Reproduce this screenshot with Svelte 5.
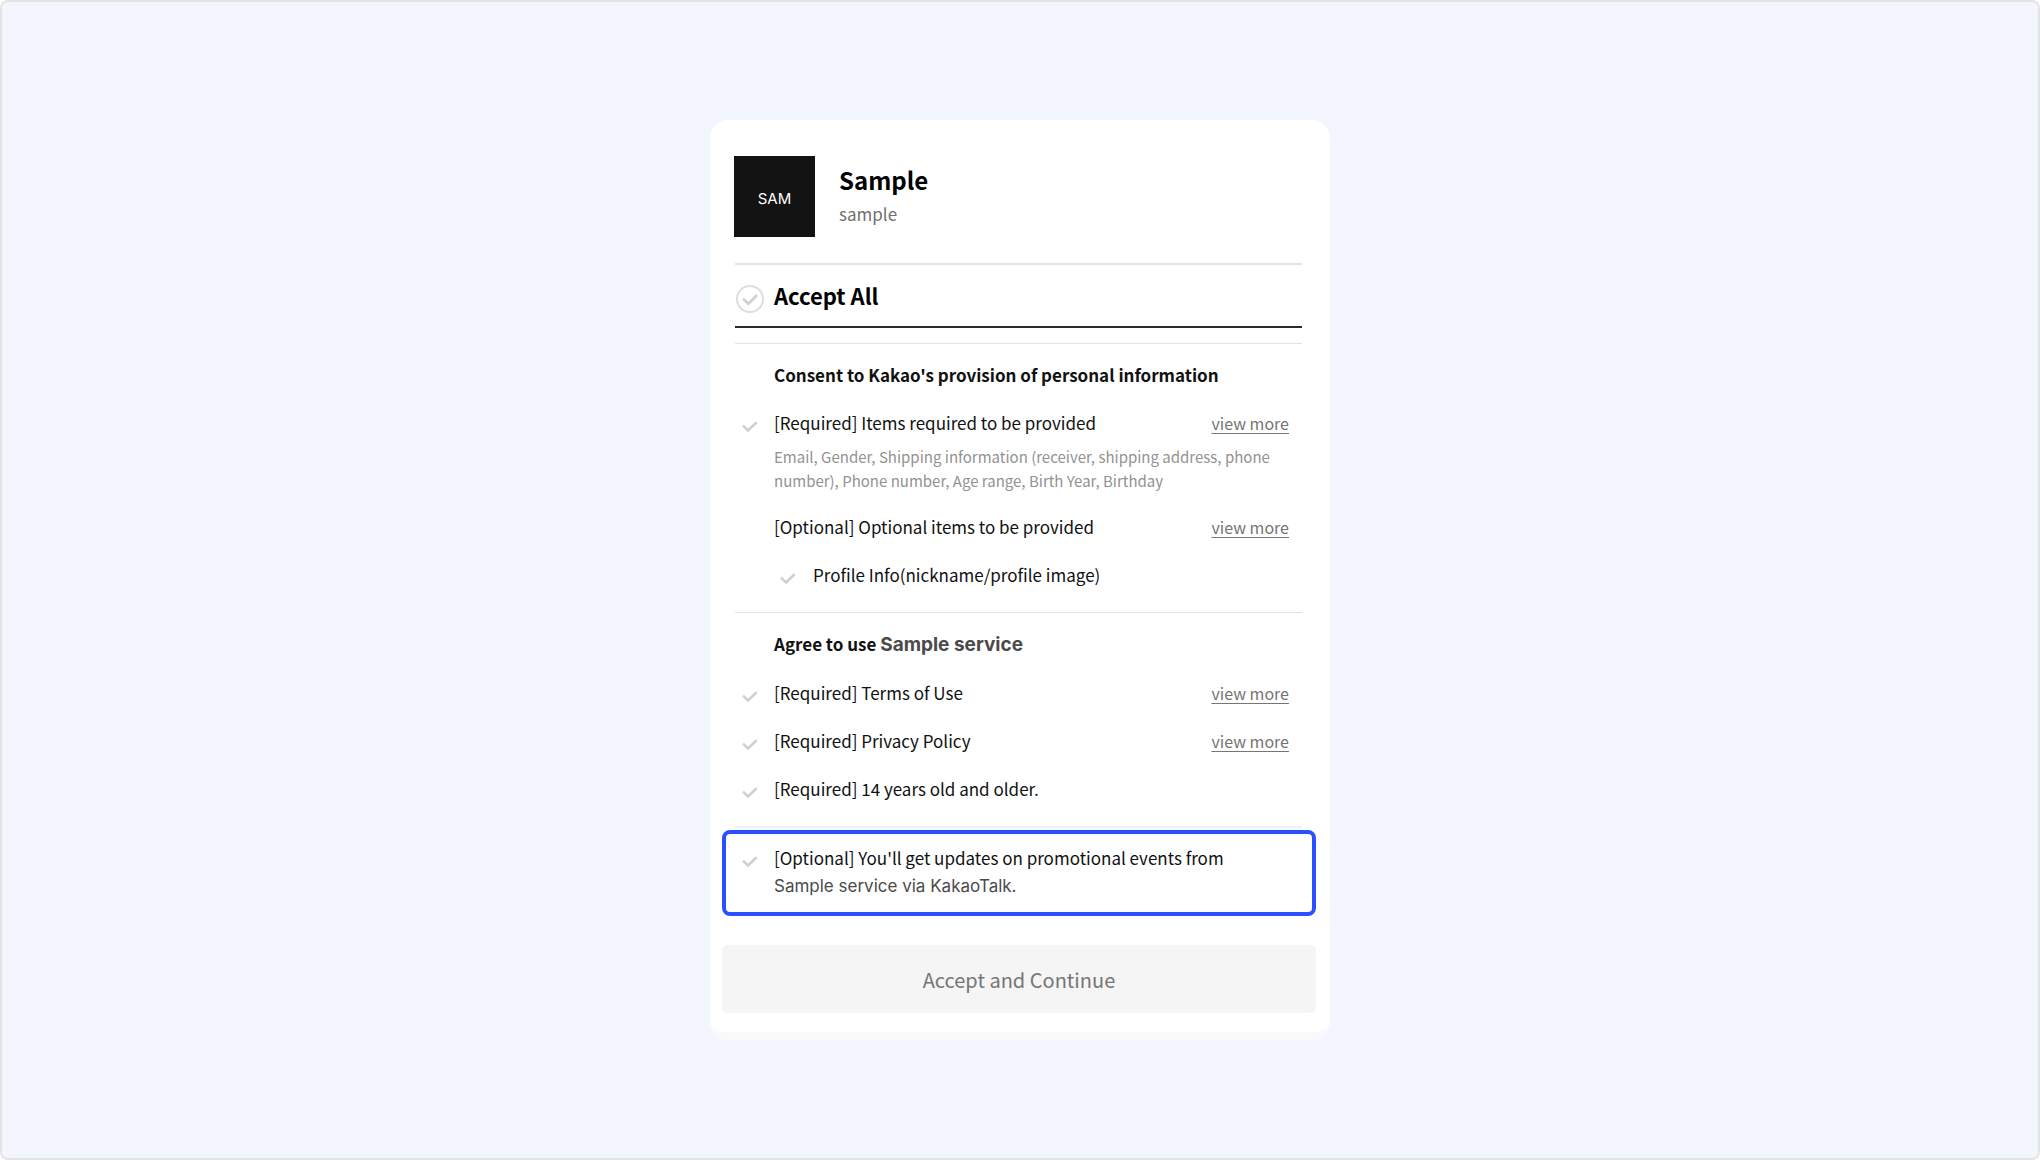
<script lang="ts">
    type Item = {
        id: string
        label: string
        more?: boolean
    }

    const terms: Item[] = [
        { id: 'terms', label: '[Required] Terms of Use', more: true },
        { id: 'privacy', label: '[Required] Privacy Policy', more: true },
        { id: 'age', label: '[Required] 14 years old and older.' },
    ]

    const ids = ['items', 'profile', ...terms.map((t) => t.id), 'promo']

    let checked: Record<string, boolean> = $state(
        Object.fromEntries(ids.map((id) => [id, false])),
    )
    let all = $derived(ids.every((id) => checked[id]))

    function toggleAll(event: Event) {
        const value = (event.target as HTMLInputElement).checked
        ids.forEach((id) => (checked[id] = value))
    }
</script>

{#snippet check(id: string)}
    <span class="check">
        <input type="checkbox" {id} bind:checked={checked[id]} />
        <svg width="16" height="12" viewBox="0 0 16 12" aria-hidden="true">
            <path d="M1 4.6 L6 9.4 L14.6 1.2" />
        </svg>
    </span>
{/snippet}

<main>
    <form class="card" onsubmit={(e) => e.preventDefault()}>
        <header>
            <div class="logo">SAM</div>
            <div>
                <h1>Sample</h1>
                <p class="sub">sample</p>
            </div>
        </header>

        <div class="inner">
            <div class="all">
                <span class="check round">
                    <input type="checkbox" id="all" checked={all} onchange={toggleAll} />
                    <svg width="28" height="28" viewBox="0 0 28 28" aria-hidden="true">
                        <circle cx="14" cy="14" r="13" />
                        <path d="M7 13.6 L12.4 18.8 L21 10" />
                    </svg>
                </span>
                <label for="all">Accept All</label>
            </div>

            <section>
                <h2>Consent to Kakao's provision of personal information</h2>
                <div>
                    <div class="row">
                        {@render check('items')}
                        <label for="items">[Required] Items required to be provided</label>
                        <a href="#items">view more</a>
                    </div>
                    <p class="desc">
                        Email, Gender, Shipping information (receiver, shipping address, phone
                        number), Phone number, Age range, Birth Year, Birthday
                    </p>
                </div>
                <div class="row">
                    <span class="text">[Optional] Optional items to be provided</span>
                    <a href="#optional">view more</a>
                </div>
                <div class="row nested">
                    {@render check('profile')}
                    <label for="profile">Profile Info(nickname/profile image)</label>
                </div>
            </section>

            <section>
                <h2>Agree to use <span class="service">Sample service</span></h2>
                {#each terms as item (item.id)}
                    <div class="row">
                        {@render check(item.id)}
                        <label for={item.id}>{item.label}</label>
                        {#if item.more}
                            <a href="#{item.id}">view more</a>
                        {/if}
                    </div>
                {/each}
            </section>
            <hr />
        </div>

        <div class="promo row">
            {@render check('promo')}
            <label for="promo">
                [Optional] You'll get updates on promotional events from
                <span class="service">Sample service via KakaoTalk.</span>
            </label>
        </div>

        <button type="submit">Accept and Continue</button>
    </form>
</main>

<style>
    :global(body) {
        margin: 0;
        background: #fff;
    }

    * {
        box-sizing: border-box;
    }

    main {
        min-height: 100vh;
        padding: 118px 24px;
        display: flex;
        justify-content: center;
        align-items: flex-start;
        background: #f3f6ff;
        border: 2px solid #e4e4e4;
        border-radius: 8px;
        font-family: 'Noto Sans CJK KR', 'Noto Sans', sans-serif;
        font-size: 17px;
        line-height: 28px;
        color: #111;
    }

    .card {
        width: 100%;
        max-width: 620px;
        padding: 36px 14px 19px 12px;
        background: #fff;
        border-bottom: 8px solid #fafafa;
        border-radius: 18px;
    }

    .inner {
        padding: 0 14px 0 13px;
    }

    header {
        display: flex;
        gap: 24px;
        padding: 0 14px 26px 12px;
    }

    .logo {
        width: 81px;
        height: 81px;
        display: flex;
        align-items: center;
        justify-content: center;
        background: #131313;
        color: #fff;
        font-family: Inter, sans-serif;
        font-size: 15px;
        padding-top: 4px;
    }

    h1,
    h2,
    p {
        margin: 0;
    }

    h1 {
        padding-top: 6px;
        font-size: 24px;
        line-height: 36px;
        font-weight: 700;
        color: #000;
    }

    .sub {
        padding-top: 2px;
        color: #707070;
    }

    .all {
        height: 65px;
        display: flex;
        align-items: center;
        padding-bottom: 2px;
        border-top: 2px solid #e4e4e4;
        border-bottom: 2px solid #2b2b2b;
        margin-bottom: 15px;
        font-size: 22px;
        font-weight: 700;
        color: #000;
    }

    section {
        display: flex;
        flex-direction: column;
        gap: 20px;
        padding: 17px 0 23px;
        border-top: 1px solid #e2e2e2;
    }

    h2 {
        padding-left: 39px;
        font-size: 17px;
        line-height: 28px;
        font-weight: 700;
    }

    .service {
        color: #4a4a4a;
        font-family: Inter, sans-serif;
    }

    h2 .service {
        font-size: 19px;
    }

    .row {
        display: flex;
        align-items: flex-start;
        padding-right: 13px;
    }

    .row .text {
        padding-left: 39px;
    }

    .nested {
        padding-left: 38px;
    }

    .row a {
        margin-left: auto;
        color: #757575;
        font-size: 16px;
        text-underline-offset: 3px;
    }

    .check {
        flex: none;
        width: 39px;
        height: 28px;
        padding: 12px 0 0 7px;
        display: grid;
    }

    .check > * {
        grid-area: 1 / 1;
    }

    .check input {
        width: 16px;
        height: 16px;
        margin: 0;
        opacity: 0;
    }

    .check svg {
        fill: none;
        stroke: #d0d0d0;
        stroke-width: 2.6;
        pointer-events: none;
    }

    .check input:checked + svg {
        stroke: #222;
    }

    .round {
        height: 32px;
        padding: 6px 0 0 1px;
    }

    .round circle {
        stroke: #dedede;
        stroke-width: 2;
    }

    .nested .check {
        width: 40px;
    }

    .desc {
        padding: 8px 13px 0 39px;
        font-size: 15px;
        line-height: 24px;
        color: #929292;
    }

    hr {
        margin: 0;
        border: 0;
        border-top: 2px solid #f0f0f0;
    }

    .promo {
        margin-top: 2px;
        padding: 10px 9px 12px;
        border: 4px solid #2b50ff;
        border-radius: 8px;
    }

    .promo .service {
        display: block;
    }

    button {
        display: block;
        width: 100%;
        height: 68px;
        margin-top: 29px;
        border: 0;
        border-radius: 5px;
        background: #f5f5f5;
        color: #757575;
        font-family: inherit;
        font-size: 20px;
    }
</style>
